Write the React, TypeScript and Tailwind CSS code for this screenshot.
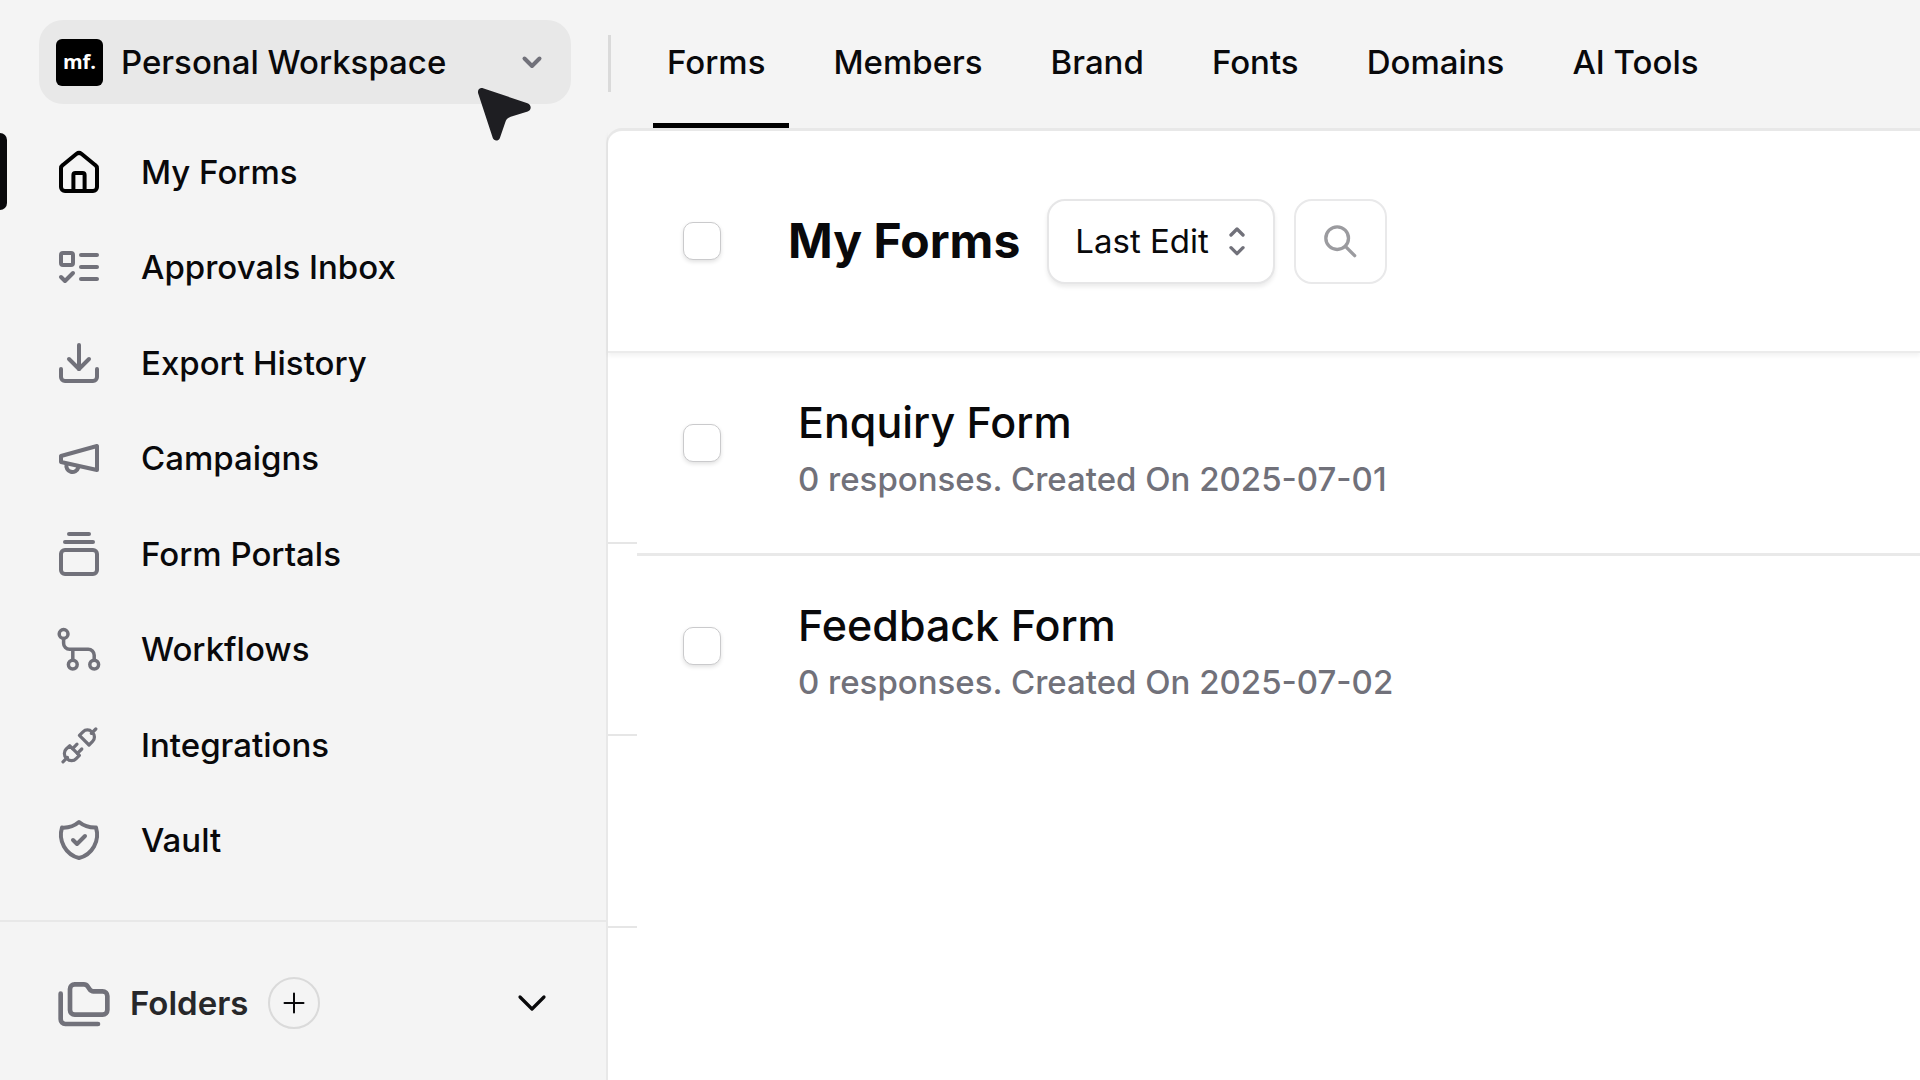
import type { ReactNode } from 'react';

interface IconProps {
  children: ReactNode;
  className?: string;
  strokeWidth?: number;
}

const Icon = ({ children, className = 'size-12', strokeWidth = 2 }: IconProps) => (
  <svg
    viewBox="0 0 24 24"
    fill="none"
    stroke="currentColor"
    strokeWidth={strokeWidth}
    strokeLinecap="round"
    strokeLinejoin="round"
    className={`shrink-0 ${className}`}
    aria-hidden="true"
  >
    {children}
  </svg>
);

const tabs = ['Forms', 'Members', 'Brand', 'Fonts', 'Domains', 'AI Tools'];

const navItems = [
  {
    label: 'My Forms',
    icon: (
      <Icon>
        <path d="M3 10.2a2 2 0 0 1 .8-1.6l7-5.7a2 2 0 0 1 2.4 0l7 5.7a2 2 0 0 1 .8 1.6v9.3a2 2 0 0 1-2 2H5a2 2 0 0 1-2-2z" />
        <path d="M9.2 21.5v-8a1 1 0 0 1 1-1h3.6a1 1 0 0 1 1 1v8" />
      </Icon>
    ),
  },
  {
    label: 'Approvals Inbox',
    icon: (
      <Icon>
        <rect x="3" y="5" width="6" height="6" rx="1" />
        <path d="m3 17 2 2 4-4" />
        <path d="M13 6h8" />
        <path d="M13 12h8" />
        <path d="M13 18h8" />
      </Icon>
    ),
  },
  {
    label: 'Export History',
    icon: (
      <Icon>
        <path d="M21 15v4a2 2 0 0 1-2 2H5a2 2 0 0 1-2-2v-4" />
        <path d="m7 10 5 5 5-5" />
        <path d="M12 15V3" />
      </Icon>
    ),
  },
  {
    label: 'Campaigns',
    icon: (
      <Icon>
        <path d="m3 11 18-5v12L3 14v-3z" />
        <path d="M11.6 16.8a3 3 0 1 1-5.8-1.6" />
      </Icon>
    ),
  },
  {
    label: 'Form Portals',
    icon: (
      <Icon>
        <path d="M7 2h10" />
        <path d="M5 6h14" />
        <rect width="18" height="12" x="3" y="10" rx="2" />
      </Icon>
    ),
  },
  {
    label: 'Workflows',
    icon: (
      <Icon strokeWidth={1.75}>
        <circle cx="4.3" cy="4.5" r="2.2" />
        <circle cx="8.9" cy="19.8" r="2.2" />
        <circle cx="19.6" cy="19.8" r="2.2" />
        <path d="M4.3 6.8v2.3a3 3 0 0 0 3 3h9.3a3 3 0 0 1 3 3v2.3M8.9 12.2v5.2" />
      </Icon>
    ),
  },
  {
    label: 'Integrations',
    icon: (
      <Icon strokeWidth={1.6}>
        <path d="m4 20.4 2.2-2.2M18.2 6.2 20.4 4" />
        <path d="m7.4 12.4 4.8 4.8-1.6 1.6a3.1 3.1 0 0 1-4.6 0l-.4-.4a3.1 3.1 0 0 1 0-4.4z" />
        <path d="m8.8 13.8 2.2-2.2M11.2 16.2l2.2-2.2" />
        <path d="m12.2 7.2 4.8 4.8 1.8-1.8a3.1 3.1 0 0 0 0-4.4l-.4-.4a3.1 3.1 0 0 0-4.4 0z" />
      </Icon>
    ),
  },
  {
    label: 'Vault',
    icon: (
      <Icon>
        <path d="M12 3c2.2 1.8 5.2 2.9 8.5 2.8A12 12 0 0 1 12 21 12 12 0 0 1 3.5 5.8 12 12 0 0 0 12 3z" />
        <path d="m9 12 2 2 4-4" />
      </Icon>
    ),
  },
];

const forms = [
  { id: 'enquiry', name: 'Enquiry Form', meta: '0 responses. Created On 2025-07-01' },
  { id: 'feedback', name: 'Feedback Form', meta: '0 responses. Created On 2025-07-02' },
];

const Checkbox = ({ id }: { id: string }) => (
  <input
    id={id}
    type="checkbox"
    className="size-[38px] shrink-0 appearance-none rounded-[10px] border border-[#cacacc] bg-white shadow-[0_2px_4px_rgba(0,0,0,0.12)] checked:bg-black"
  />
);

const WorkspaceSwitcher = () => (
  <div className="relative w-[606px] shrink-0 pt-5 pr-[35px] pl-[39px]">
    <button className="flex h-[84px] w-full items-center rounded-3xl bg-[#e8e8e8] pr-[27px] pl-[17px]">
      <span className="flex size-[47px] items-center justify-center rounded-md bg-black font-['Open_Sans',sans-serif] text-xl font-bold text-white">
        mf.
      </span>
      <span className="ml-[18px] flex-1 text-left">Personal Workspace</span>
      <Icon className="size-6 text-[#71717a]" strokeWidth={4}>
        <path d="m4.5 8.5 7.5 7.5 7.5-7.5" />
      </Icon>
    </button>
    <svg
      viewBox="0 0 54 54"
      className="absolute top-[88px] left-[477px] size-[54px]"
      fill="#1e1e22"
      aria-hidden="true"
    >
      <path d="M6 .2 50.5 15.2c4.2 1.5 4.2 6.8.2 8.3l-17 5.2c-3 1.1-4.6 2.8-5.4 5.6l-5.5 15.9c-1.3 3.2-5.9 3.2-7-.1L1.2 5.5C.2 2.2 2.5-.9 6 .2z" />
    </svg>
  </div>
);

const Sidebar = () => (
  <aside className="flex w-[606px] shrink-0 flex-col">
    <nav className="-mt-1 grid h-[796px] auto-rows-fr pb-8">
      {navItems.map((item, i) => (
        <a key={item.label} href="#" className="flex items-center">
          <span className={`h-[77px] w-[7px] rounded-r-lg ${i === 0 ? 'bg-[#09090b]' : ''}`} />
          <span className={`ml-12 ${i === 0 ? 'text-black' : 'text-[#71717a]'}`}>{item.icon}</span>
          <span className="ml-[38px]">{item.label}</span>
        </a>
      ))}
    </nav>
    <div className="flex h-[164px] items-center border-t-2 border-[#e8e8e8] pr-[58px] pl-14">
      <Icon className="size-14 text-[#71717a]">
        <path d="M20 17a2 2 0 0 0 2-2V9a2 2 0 0 0-2-2h-3.9a2 2 0 0 1-1.69-.9l-.81-1.2a2 2 0 0 0-1.67-.9H8a2 2 0 0 0-2 2v9a2 2 0 0 0 2 2Z" />
        <path d="M2 8v11a2 2 0 0 0 2 2h14" />
      </Icon>
      <h2 className="ml-[18px] font-semibold text-[#27272a]">Folders</h2>
      <button
        aria-label="Add folder"
        className="ml-5 flex size-[52px] items-center justify-center rounded-full border-2 border-[#dadada]"
      >
        <Icon className="size-6">
          <path d="M12 2.5v19M2.5 12h19" />
        </Icon>
      </button>
      <button aria-label="Toggle folders" className="ml-auto">
        <Icon className="size-8" strokeWidth={2.4}>
          <path d="m3 7.5 9 9 9-9" />
        </Icon>
      </button>
    </div>
  </aside>
);

const App = () => {
  return (
    <div className="flex min-h-screen flex-col overflow-x-hidden bg-[#f4f4f4] font-['Inter',sans-serif] text-[33px] leading-[44px] font-medium text-[#09090b]">
      <header className="flex h-[128px]">
        <WorkspaceSwitcher />
        <nav className="flex flex-1 pl-[2px]">
          <span className="mt-[35px] h-[57px] w-[3px] bg-[#dadada]" />
          <div className="ml-[42px] flex gap-[30px]">
            {tabs.map((tab, i) => (
              <a
                key={tab}
                href="#"
                className={`flex items-center border-b-[5px] pr-6 pl-[14px] ${
                  i === 0 ? 'border-black' : 'border-transparent'
                }`}
              >
                {tab}
              </a>
            ))}
          </div>
        </nav>
      </header>

      <div className="flex flex-1">
        <Sidebar />
        <main className="flex flex-1 flex-col rounded-tl-2xl border-t-[3px] border-l-2 border-[#e8e8e8] bg-white">
          <div className="flex h-[222px] items-center border-b-2 border-[#ececec] pl-[75px] shadow-[0_3px_4px_rgba(0,0,0,0.05)]">
            <Checkbox id="select-all" />
            <h1 className="ml-[67px] text-[48px] leading-[60px] font-bold">
              <label htmlFor="select-all">My Forms</label>
            </h1>
            <button className="ml-[27px] flex h-[85px] items-center rounded-[18px] border-2 border-[#e6e6e7] bg-white pr-5 pl-[26px] font-normal shadow-[0_3px_4px_rgba(0,0,0,0.08)]">
              Last Edit
              <Icon className="ml-3 size-8 text-[#71717a]" strokeWidth={2.5}>
                <path d="m7.5 7.5 4.5-4.5 4.5 4.5M7.5 17l4.5 4.5 4.5-4.5" />
              </Icon>
            </button>
            <button
              aria-label="Search forms"
              className="ml-[19px] flex h-[85px] w-[93px] items-center justify-center rounded-[18px] border-2 border-[#e9e9ea] text-[#9b9b9f]"
            >
              <Icon className="size-10" strokeWidth={2}>
                <circle cx="10.3" cy="10.3" r="6.8" />
                <path d="m15.4 15.4 5.4 5.4" />
              </Icon>
            </button>
          </div>

          <div className="flex flex-1">
            <div className="w-[29px] shrink-0">
              <div className="h-[191px] border-b-2 border-[#e6e6e6]" />
              <div className="h-[192px] border-b-2 border-[#e6e6e6]" />
              <div className="h-[192px] border-b-2 border-[#e6e6e6]" />
            </div>
            <ul className="flex-1">
              {forms.map((form, i) => (
                <li
                  key={form.id}
                  className={`flex h-[203px] items-center border-b-[3px] pb-5 pl-[46px] ${
                    i < forms.length - 1 ? 'border-[#e9e9e9]' : 'border-transparent'
                  }`}
                >
                  <Checkbox id={form.id} />
                  <div className="ml-[77px] pt-2">
                    <h3 className="text-[43px] leading-[56px]">
                      <label htmlFor={form.id}>{form.name}</label>
                    </h3>
                    <p className="mt-[7px] text-[#71717a]">{form.meta}</p>
                  </div>
                </li>
              ))}
            </ul>
          </div>
        </main>
      </div>
    </div>
  );
};

export default App;
